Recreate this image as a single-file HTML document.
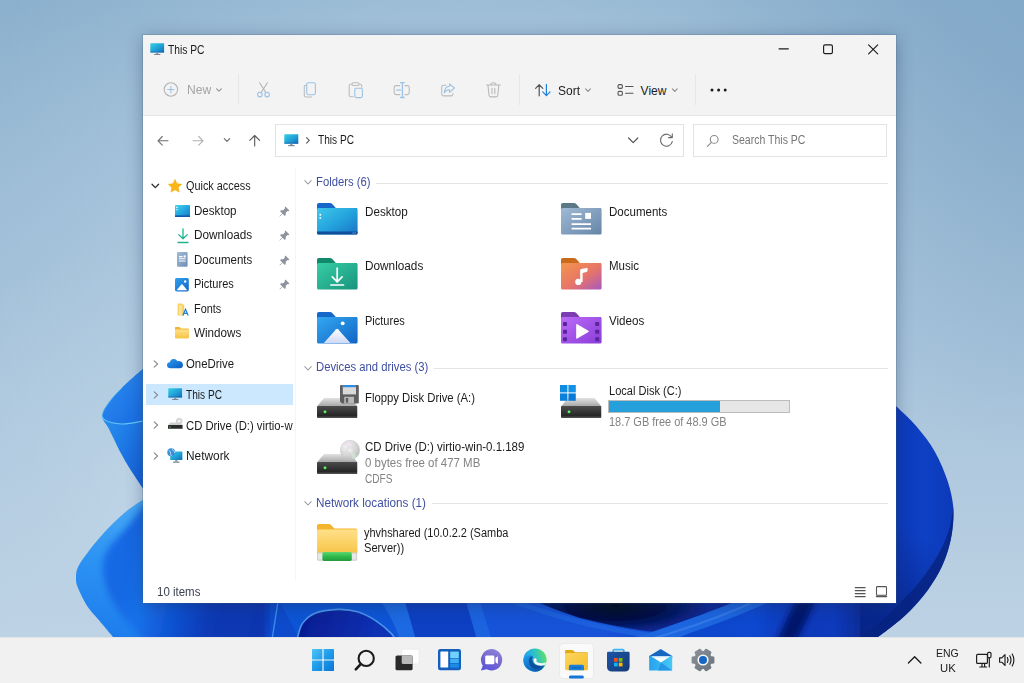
<!DOCTYPE html>
<html lang="en">
<head>
<meta charset="utf-8">
<title>This PC</title>
<style>
*{box-sizing:border-box;margin:0;padding:0}
html,body{width:1024px;height:683px;overflow:hidden;background:#a9c4db}
body{position:relative;font-family:"Liberation Sans",sans-serif;font-size:12px;color:#1b1b1b}
.abs{position:absolute}
svg{position:absolute;overflow:visible}
.t{position:absolute;white-space:nowrap;font-size:12px;line-height:16px;height:16px;color:#1b1b1b}
.g{color:#838383}
.hd{color:#3f4ea0}
#wall{left:0;top:0;width:1024px;height:683px}
#win{position:absolute;left:143px;top:35px;width:753.200px;height:568.400px;background:#fff;box-shadow:0 0 0 1px rgba(70,95,125,.22),0 3px 16px rgba(25,45,85,.38)}
#hdr{position:absolute;left:0;top:0;width:753px;height:80.500px;background:#f3f3f3;border-bottom:1px solid #e6e6e6}
#task{position:absolute;left:0;top:637px;width:1024px;height:46px;background:#f1f1f1;border-top:1px solid #e4e4e4}
.sep{position:absolute;width:1px;background:#e7e7e7}
.box{position:absolute;border:1px solid #e3e3e3;background:#fff}
.gl{position:absolute;height:1px;background:#e4e4e4}
.t{transform-origin:0 50%}
.ic{stroke-linecap:round;stroke-linejoin:round;fill:none}
</style>
</head>
<body>
<!-- WALLPAPER -->
<svg id="wall" viewBox="0 0 1024 683" width="1024" height="683">
<defs>
<linearGradient id="bgv" x1="0" y1="0" x2="0" y2="1"><stop offset="0" stop-color="#8bb0cd"/><stop offset=".45" stop-color="#a3c0d8"/><stop offset=".93" stop-color="#bdd2e4"/><stop offset="1" stop-color="#bdd2e4"/></linearGradient>
<radialGradient id="bgr" gradientUnits="userSpaceOnUse" cx="470" cy="230" r="560" gradientTransform="translate(0 70) scale(1 .7)"><stop offset="0" stop-color="#c4dbec" stop-opacity=".75"/><stop offset=".55" stop-color="#bcd4e7" stop-opacity=".4"/><stop offset="1" stop-color="#b4d0e4" stop-opacity="0"/></radialGradient>
<radialGradient id="bgd" gradientUnits="userSpaceOnUse" cx="1090" cy="40" r="420"><stop offset="0" stop-color="#7ba2c4" stop-opacity=".6"/><stop offset=".5" stop-color="#7ba2c4" stop-opacity=".28"/><stop offset="1" stop-color="#7ba2c4" stop-opacity="0"/></radialGradient>
<radialGradient id="bgl" gradientUnits="userSpaceOnUse" cx="150" cy="500" r="260"><stop offset="0" stop-color="#c6daeb" stop-opacity=".6"/><stop offset=".5" stop-color="#c0d6e8" stop-opacity=".3"/><stop offset="1" stop-color="#c0d6e8" stop-opacity="0"/></radialGradient>
<linearGradient id="pRd" gradientUnits="userSpaceOnUse" x1="930" y1="540" x2="880" y2="640"><stop offset="0" stop-color="#041462" stop-opacity="0"/><stop offset="1" stop-color="#041462" stop-opacity=".55"/></linearGradient>
<linearGradient id="pU" x1="0" y1="0" x2="1" y2="1"><stop offset="0" stop-color="#2d8ff0"/><stop offset="1" stop-color="#176ae2"/></linearGradient>
<linearGradient id="pUo" x1="0" y1="0" x2=".6" y2="1"><stop offset="0" stop-color="#3a9cf2"/><stop offset=".5" stop-color="#2283ea"/><stop offset="1" stop-color="#1460d8"/></linearGradient>
<linearGradient id="pL" gradientUnits="userSpaceOnUse" x1="130" y1="500" x2="100" y2="640"><stop offset="0" stop-color="#49a8f4"/><stop offset=".45" stop-color="#2d93f3"/><stop offset="1" stop-color="#1c7bec"/></linearGradient>
<linearGradient id="pLi" gradientUnits="userSpaceOnUse" x1="100" y1="560" x2="262" y2="600"><stop offset="0" stop-color="#1a70ea"/><stop offset=".12" stop-color="#1566e2"/><stop offset=".3" stop-color="#1a72ea"/><stop offset=".5" stop-color="#0f54d4"/><stop offset=".72" stop-color="#0a3ab6"/><stop offset="1" stop-color="#0a36b0"/></linearGradient>
<linearGradient id="pR" gradientUnits="userSpaceOnUse" x1="880" y1="500" x2="955" y2="500"><stop offset="0" stop-color="#0b37b6"/><stop offset=".6" stop-color="#0e40c4"/><stop offset="1" stop-color="#0c3ab8"/></linearGradient>
<linearGradient id="b1" gradientUnits="userSpaceOnUse" x1="140" y1="0" x2="262" y2="0"><stop offset="0" stop-color="#166ee4"/><stop offset=".2" stop-color="#0f56d4"/><stop offset=".5" stop-color="#0a3cb8"/><stop offset="1" stop-color="#0a36b0"/></linearGradient>
<linearGradient id="b2" gradientUnits="userSpaceOnUse" x1="300" y1="610" x2="395" y2="640"><stop offset="0" stop-color="#061c90"/><stop offset="1" stop-color="#0b36bc"/></linearGradient>
<radialGradient id="b3" gradientUnits="userSpaceOnUse" cx="615" cy="606" r="95" gradientTransform="translate(0 424) scale(1 .3)"><stop offset="0" stop-color="#01061e"/><stop offset=".5" stop-color="#030f48"/><stop offset="1" stop-color="#0a2a9a"/></radialGradient>
<linearGradient id="b4" gradientUnits="userSpaceOnUse" x1="600" y1="0" x2="900" y2="0"><stop offset="0" stop-color="#1352d8"/><stop offset=".3" stop-color="#0f46cc"/><stop offset=".51" stop-color="#0f48d0"/><stop offset=".65" stop-color="#0b39b8"/><stop offset=".78" stop-color="#0b3abc"/><stop offset=".87" stop-color="#092c98"/><stop offset="1" stop-color="#08278c"/></linearGradient>
<clipPath id="loclip"><path d="M150.0 496.0C148.8 496.7 146.3 497.6 142.5 500.0C138.7 502.4 132.2 506.6 127.3 510.5C122.4 514.4 118.3 518.2 113.2 523.3C108.1 528.4 101.7 535.2 96.8 540.9C91.9 546.6 87.2 553.0 84.0 557.5C80.8 562.0 78.9 564.8 77.6 568.0C76.3 571.2 76.0 573.8 76.0 577.0C76.0 580.2 75.7 582.1 77.6 587.0C79.5 591.9 83.9 600.9 87.5 606.5C91.1 612.1 95.1 615.6 99.2 620.5C103.3 625.4 109.2 632.4 112.0 635.8C114.8 639.2 115.3 640.1 116.0 641.0L150 641L150 496Z"/><rect x="140" y="598" width="130" height="40"/></clipPath>
<filter id="bl3" x="-20%" y="-20%" width="140%" height="140%"><feGaussianBlur stdDeviation="3"/></filter>
<filter id="bl1" x="-5%" y="-20%" width="110%" height="140%"><feGaussianBlur stdDeviation=".7"/></filter>
<clipPath id="strip"><rect x="140" y="598" width="730" height="40"/></clipPath>
</defs>
<rect width="1024" height="683" fill="url(#bgv)"/>
<rect width="1024" height="683" fill="url(#bgr)"/>
<rect width="1024" height="683" fill="url(#bgd)"/>
<rect width="1024" height="683" fill="url(#bgl)"/>
<!-- bottom strip -->
<g clip-path="url(#strip)"><g filter="url(#bl1)">
<rect x="140" y="598" width="760" height="40" fill="#1154d6"/>
<path d="M262 598L271 640H300L278 598Z" fill="#0f4ccc"/>
<path d="M272 640L278.500 598" stroke="#3c8cea" stroke-width="1.400" fill="none"/>
<path d="M297.4 638.0C298.2 635.6 299.5 627.5 302.5 623.4C305.5 619.3 309.3 615.5 315.2 613.2C321.1 610.9 330.8 609.6 338.0 609.4C345.2 609.2 352.1 610.1 358.4 612.0C364.7 613.9 370.5 617.3 376.0 620.9C381.5 624.5 388.2 630.4 391.4 633.6C394.6 636.8 394.4 638.9 395.0 640.0Z" fill="url(#b2)"/>
<path d="M297.4 638.0C298.2 635.6 299.5 627.5 302.5 623.4C305.5 619.3 309.3 615.5 315.2 613.2C321.1 610.9 330.8 609.6 338.0 609.4C345.2 609.2 352.1 610.1 358.4 612.0C364.7 613.9 370.5 617.3 376.0 620.9C381.5 624.5 388.2 630.4 391.4 633.6C394.6 636.8 394.4 638.9 395.0 640.0" stroke="#4a96ec" stroke-width="1.600" fill="none"/>
<path d="M378 598Q392 615 400 640H418L404 598Z" fill="#1d6ae2"/>
<path d="M404 598L416 640H478L465 598Z" fill="#0b3fc2"/>
<path d="M465 598L477 640H493L479 598Z" fill="#1a63e0"/>
<path d="M479 598L492 640H900V598Z" fill="#1352d8"/>
<rect x="600" y="598" width="300" height="42" fill="url(#b4)"/>
<path d="M528 598Q552 609 580 618Q620 628 655 632Q700 617 748 598Z" fill="url(#b3)"/>
<path d="M505 598Q545 613 580 622Q620 632 656 636" stroke="#2a6ee4" stroke-width="5" fill="none" opacity=".55"/>
<path d="M620 642L655 631Q700 616 745 598H778Q735 618 690 633L668 642Z" fill="#1f66e0"/>
<path d="M640 642L668 634Q720 618 762 598" stroke="#3a80ea" stroke-width="2" fill="none" opacity=".7"/>
<path d="M797 598H817L796 642H776Z" fill="#04186c" filter="url(#bl3)"/>
</g></g>
<!-- right petal -->
<path d="M890.0 401.0C891.1 401.9 892.1 402.2 896.5 406.5C900.9 410.8 910.2 419.0 916.6 426.6C923.0 434.2 929.8 442.8 935.0 452.0C940.2 461.2 944.8 472.4 947.8 481.6C950.8 490.8 952.5 499.3 953.3 507.2C954.1 515.1 953.4 521.7 952.5 529.0C951.6 536.3 950.1 543.7 947.8 551.0C945.5 558.3 942.6 565.7 938.6 573.0C934.6 580.3 929.5 588.0 924.0 595.0C918.5 602.0 911.7 609.2 905.6 615.0C899.5 620.8 892.9 625.7 887.3 630.0C881.7 634.3 874.5 639.2 872.0 641.0L860 641L860 401Z" fill="url(#pR)"/>
<path d="M890.0 401.0C891.1 401.9 892.1 402.2 896.5 406.5C900.9 410.8 910.2 419.0 916.6 426.6C923.0 434.2 929.8 442.8 935.0 452.0C940.2 461.2 944.8 472.4 947.8 481.6C950.8 490.8 952.5 499.3 953.3 507.2C954.1 515.1 953.4 521.7 952.5 529.0C951.6 536.3 950.1 543.7 947.8 551.0C945.5 558.3 942.6 565.7 938.6 573.0C934.6 580.3 929.5 588.0 924.0 595.0C918.5 602.0 911.7 609.2 905.6 615.0C899.5 620.8 892.9 625.7 887.3 630.0C881.7 634.3 874.5 639.2 872.0 641.0L860 641L860 401Z" fill="url(#pRd)"/>
<path d="M953.3 507.2C953.2 510.8 953.4 521.7 952.5 529.0C951.6 536.3 950.1 543.7 947.8 551.0C945.5 558.3 942.6 565.7 938.6 573.0C934.6 580.3 929.5 588.0 924.0 595.0C918.5 602.0 911.7 609.2 905.6 615.0C899.5 620.8 892.9 625.7 887.3 630.0C881.7 634.3 874.5 639.2 872.0 641.0L862 636L862.0 636.0C865.0 633.7 873.7 627.5 880.0 622.0C886.3 616.5 893.2 610.0 900.0 603.0C906.8 596.0 914.7 588.0 921.0 580.0C927.3 572.0 933.3 563.3 938.0 555.0C942.7 546.7 946.5 538.0 949.0 530.0C951.5 522.0 952.6 511.0 953.3 507.2Z" fill="#08237f" opacity=".8"/>
<!-- left lower petal -->
<path d="M150.0 496.0C148.8 496.7 146.3 497.6 142.5 500.0C138.7 502.4 132.2 506.6 127.3 510.5C122.4 514.4 118.3 518.2 113.2 523.3C108.1 528.4 101.7 535.2 96.8 540.9C91.9 546.6 87.2 553.0 84.0 557.5C80.8 562.0 78.9 564.8 77.6 568.0C76.3 571.2 76.0 573.8 76.0 577.0C76.0 580.2 75.7 582.1 77.6 587.0C79.5 591.9 83.9 600.9 87.5 606.5C91.1 612.1 95.1 615.6 99.2 620.5C103.3 625.4 109.2 632.4 112.0 635.8C114.8 639.2 115.3 640.1 116.0 641.0L150 641L150 496Z" fill="url(#pL)"/>
<g clip-path="url(#loclip)"><path d="M150.0 503.0C148.8 503.7 146.3 503.0 142.5 507.0C138.7 511.0 132.9 520.0 127.3 526.8C121.6 533.6 112.7 541.8 108.6 548.0C104.5 554.2 103.3 558.5 102.7 564.3C102.1 570.1 102.8 576.0 105.0 583.0C107.2 590.0 111.5 599.5 115.6 606.5C119.7 613.5 125.7 620.3 129.6 625.2C133.5 630.1 136.8 633.2 139.0 635.8C141.2 638.4 142.3 640.1 143.0 641.0L143 641L268 641L268 596L150 596L150 503Z" fill="url(#pLi)" filter="url(#bl3)"/></g>
<!-- left upper petal -->
<path d="M150.0 363.0C148.8 364.0 146.3 365.9 142.6 369.2C138.9 372.4 132.5 377.9 127.6 382.5C122.7 387.1 117.1 392.5 113.3 396.9C109.5 401.3 106.4 405.8 104.5 409.0C102.6 412.2 102.4 415.2 102.0 416.4L102.0 416.4C102.2 417.1 102.5 418.6 103.5 420.5C104.5 422.4 106.2 424.0 108.2 427.6C110.2 431.2 113.1 437.6 115.3 442.0C117.5 446.4 119.1 449.9 121.5 454.3C123.9 458.7 127.0 464.2 129.7 468.6C132.4 473.0 135.8 477.7 137.9 480.9C140.1 484.1 140.6 485.1 142.6 488.0C144.6 490.9 148.8 496.3 150.0 498.0L150 363Z" fill="url(#pUo)"/>
<path d="M150.0 363.0C148.8 364.0 146.3 365.9 142.6 369.2C138.9 372.4 132.5 377.9 127.6 382.5C122.7 387.1 117.1 392.5 113.3 396.9C109.5 401.3 106.4 405.8 104.5 409.0C102.6 412.2 102.4 415.2 102.0 416.4L102.0 416.4C102.4 416.9 103.0 418.6 104.5 419.6C106.0 420.6 108.4 421.8 111.2 422.5C114.0 423.2 118.1 423.9 121.5 424.0C124.9 424.1 128.2 423.6 131.7 423.1C135.2 422.6 139.5 421.6 142.6 421.0C145.7 420.4 148.8 419.8 150.0 419.5L150 363Z" fill="url(#pU)"/>
<path d="M102.0 416.4C102.4 416.9 103.0 418.6 104.5 419.6C106.0 420.6 108.4 421.8 111.2 422.5C114.0 423.2 118.1 423.9 121.5 424.0C124.9 424.1 128.2 423.6 131.7 423.1C135.2 422.6 139.5 421.6 142.6 421.0C145.7 420.4 148.8 419.8 150.0 419.5" fill="none" stroke="#62c8f8" stroke-width="1.100"/>
<path d="M122.0 388.0C120.5 389.5 116.2 393.4 113.3 396.9C110.4 400.4 106.4 405.8 104.5 409.0C102.6 412.2 102.4 415.2 102.0 416.4" fill="none" stroke="#58bef6" stroke-width="1" opacity=".75"/>
</svg>

<!-- WINDOW -->
<div id="win">
<div id="hdr"></div>
</div>
<!-- shared defs -->
<svg width="0" height="0" style="left:-10px;top:-10px">
<defs>
<linearGradient id="mon" x1="0" y1="0" x2="1" y2="1"><stop offset="0" stop-color="#35d0e6"/><stop offset=".55" stop-color="#1f9fd6"/><stop offset="1" stop-color="#1668b8"/></linearGradient>
<linearGradient id="fy" x1="0" y1="0" x2="0" y2="1"><stop offset="0" stop-color="#ffe08a"/><stop offset="1" stop-color="#f6c445"/></linearGradient>
<linearGradient id="dk" x1="0" y1="0" x2="1" y2="1"><stop offset="0" stop-color="#48d4f0"/><stop offset=".5" stop-color="#24a8e0"/><stop offset="1" stop-color="#1a78c8"/></linearGradient>
<linearGradient id="pic" x1="0" y1="0" x2="1" y2="1"><stop offset="0" stop-color="#2fa2f0"/><stop offset="1" stop-color="#1266c6"/></linearGradient>
<linearGradient id="doc" x1="0" y1="0" x2="1" y2="1"><stop offset="0" stop-color="#a3bcd8"/><stop offset="1" stop-color="#6f8db4"/></linearGradient>
<linearGradient id="od" x1="0" y1="0" x2="1" y2="1"><stop offset="0" stop-color="#2c9cf0"/><stop offset="1" stop-color="#0a5cc0"/></linearGradient>
<symbol id="pin" viewBox="0 0 11 11"><path d="M6.400 .6L10.400 4.600L9.300 5.300L8.500 5.100L6.800 6.800L6.700 9.100L5.800 9.900L3.600 7.700L.9 10.400L.5 10.500L.6 10.100L3.300 7.400L1.100 5.200L1.900 4.300L4.200 4.200L5.900 2.500L5.700 1.700Z" fill="#8d939c"/></symbol>
<symbol id="chr" viewBox="0 0 6 8"><path d="M1.200 .8L4.600 4L1.200 7.200" fill="none" stroke="#8b8b8b" stroke-width="1.150" stroke-linecap="round" stroke-linejoin="round"/></symbol>
<linearGradient id="fDk" x1="0" y1="0" x2="1" y2="1"><stop offset="0" stop-color="#40c8ea"/><stop offset=".5" stop-color="#24a4de"/><stop offset="1" stop-color="#1a72c4"/></linearGradient>
<linearGradient id="fDl" x1="0" y1="0" x2="1" y2="1"><stop offset="0" stop-color="#38cea6"/><stop offset="1" stop-color="#17937c"/></linearGradient>
<linearGradient id="fPc" x1="0" y1="0" x2="1" y2="1"><stop offset="0" stop-color="#33a8f2"/><stop offset="1" stop-color="#1164c4"/></linearGradient>
<linearGradient id="fDc" x1="0" y1="0" x2="1" y2="1"><stop offset="0" stop-color="#9fbad6"/><stop offset="1" stop-color="#6685a6"/></linearGradient>
<linearGradient id="fMu" x1="0" y1="0" x2="1" y2="1"><stop offset="0" stop-color="#f5964a"/><stop offset=".55" stop-color="#e6746a"/><stop offset="1" stop-color="#a858c0"/></linearGradient>
<linearGradient id="fVi" x1="0" y1="0" x2="1" y2="1"><stop offset="0" stop-color="#bb6cf8"/><stop offset="1" stop-color="#8a3cd8"/></linearGradient>
<linearGradient id="mtn" x1="0" y1="0" x2="0" y2="1"><stop offset="0" stop-color="#ffffff"/><stop offset="1" stop-color="#cfd8f6"/></linearGradient>
<linearGradient id="dTop" x1="0" y1="0" x2="0" y2="1"><stop offset="0" stop-color="#e2e2e2"/><stop offset="1" stop-color="#a6a6a6"/></linearGradient>
<linearGradient id="dFr" x1="0" y1="0" x2="0" y2="1"><stop offset="0" stop-color="#4b4b4b"/><stop offset=".8" stop-color="#272727"/><stop offset="1" stop-color="#555"/></linearGradient>
<radialGradient id="cdg" cx=".35" cy=".3" r=".8"><stop offset="0" stop-color="#f6f6f6"/><stop offset=".6" stop-color="#d4d4d4"/><stop offset="1" stop-color="#b4b4b4"/></radialGradient>
<linearGradient id="grn" x1="0" y1="0" x2="0" y2="1"><stop offset="0" stop-color="#5fd873"/><stop offset=".5" stop-color="#2fba4c"/><stop offset="1" stop-color="#249a3e"/></linearGradient>
<symbol id="tab" viewBox="0 0 40.600 31.600"><path d="M0 1.800Q0 0 1.800 0H12.800Q14.400 0 15.500 1.200L18.800 4.900H40V12H0Z"/></symbol>
<symbol id="drv" viewBox="0 0 40.500 20"><path d="M7 0H33.500L40.300 8.200H.2Z" fill="url(#dTop)"/><rect y="8" width="40.500" height="12" rx=".8" fill="url(#dFr)"/><circle cx="8" cy="13.800" r="1.500" fill="#3fe444"/><circle cx="8" cy="13.800" r=".7" fill="#a4ffa0"/></symbol>
<symbol id="gch" viewBox="0 0 8 5"><path d="M.8 .7L4 4L7.200 .7" fill="none" stroke="#9a9a9a" stroke-width="1.050" stroke-linecap="round" stroke-linejoin="round"/></symbol>
<linearGradient id="wl" gradientUnits="userSpaceOnUse" x1="0" y1="0" x2="22" y2="22"><stop offset="0" stop-color="#4ec4f8"/><stop offset=".5" stop-color="#1e9cea"/><stop offset="1" stop-color="#0a74d8"/></linearGradient>
<linearGradient id="cht" x1=".8" y1="0" x2=".3" y2="1"><stop offset="0" stop-color="#8e86da"/><stop offset=".5" stop-color="#7767cf"/><stop offset="1" stop-color="#5a55da"/></linearGradient>
<linearGradient id="edT" x1="0" y1=".5" x2="1" y2=".25"><stop offset="0" stop-color="#1b96e2"/><stop offset=".3" stop-color="#22b2e2"/><stop offset=".62" stop-color="#37c8b4"/><stop offset="1" stop-color="#66e35c"/></linearGradient>
<linearGradient id="edB" x1=".1" y1=".1" x2=".75" y2="1"><stop offset="0" stop-color="#1b96e2"/><stop offset=".45" stop-color="#1578d0"/><stop offset="1" stop-color="#0c54a6"/></linearGradient>
<linearGradient id="sto" x1="0" y1="0" x2="1" y2="1"><stop offset="0" stop-color="#1c55a8"/><stop offset="1" stop-color="#153a74"/></linearGradient>
<linearGradient id="mlb" x1="0" y1="0" x2="1" y2="0"><stop offset="0" stop-color="#27a2ec"/><stop offset="1" stop-color="#46c8f6"/></linearGradient>
<linearGradient id="gr" x1="0" y1="0" x2="1" y2="1"><stop offset="0" stop-color="#8a9199"/><stop offset="1" stop-color="#6a727c"/></linearGradient>
<linearGradient id="exy" x1="0" y1="0" x2="1" y2="1"><stop offset="0" stop-color="#fcd660"/><stop offset="1" stop-color="#f6bd2a"/></linearGradient>
<symbol id="pc" viewBox="0 0 15 13"><rect x=".3" y=".3" width="14.400" height="9.600" rx=".6" fill="url(#mon)"/><rect x=".3" y="8.800" width="14.400" height="1.100" fill="#0f5aa5" opacity=".55"/><rect x="6.300" y="9.900" width="2.400" height="1.500" fill="#8a98a6"/><rect x="4.200" y="11.300" width="6.600" height="1.100" rx=".3" fill="#7b8894"/></symbol>
</defs>
</svg>

<!-- TITLE BAR -->
<svg style="left:150px;top:43px" width="14.500" height="12.600"><use href="#pc" width="14.500" height="12.600"/></svg>
<div class="t" style="left:167.6px;top:42.100px;transform:scaleX(0.855)">This PC</div>
<svg style="left:776px;top:40px" width="110" height="20" viewBox="776 40 110 20" class="ic" stroke="#1d1d1d" stroke-width="1.150">
<path d="M779 48.800H788.300"/>
<rect x="823.600" y="44.800" width="8.800" height="8.800" rx="1.400"/>
<path d="M868.600 44.800L877.700 53.900M877.700 44.800L868.600 53.900"/>
</svg>

<!-- TOOLBAR -->
<svg style="left:143px;top:70px" width="753" height="40" viewBox="143 70 753 40" class="ic" stroke-width="1.100">
<!-- new -->
<circle cx="170.900" cy="89.500" r="6.700" stroke="#b5b5b5"/>
<path d="M170.900 86.300V92.700M167.700 89.500H174.100" stroke="#9cc3e6"/>
<path d="M216.600 88.800L219 91.200L221.400 88.800" stroke="#9a9a9a" stroke-width="1.200"/>
<!-- cut -->
<path d="M259.600 82.800L266 92.700M267.400 82.800L261 92.700" stroke="#b4b4b4"/>
<circle cx="259.900" cy="94.600" r="2.300" stroke="#9cc3e6"/><circle cx="267.100" cy="94.600" r="2.300" stroke="#9cc3e6"/>
<!-- copy -->
<path d="M306 85.200H305.600Q304.300 85.200 304.300 86.600V95.400Q304.300 97 305.900 97H311.600" stroke="#bcbcbc"/>
<rect x="306.700" y="82.700" width="8.700" height="12" rx="1.600" stroke="#9cc3e6"/>
<!-- paste -->
<path d="M351.500 84.300H350.600Q349.200 84.300 349.200 85.700V95.300Q349.200 96.800 350.600 96.800H353.200M359.500 84.300H360.300Q361.700 84.300 361.700 85.700V87" stroke="#bcbcbc"/>
<rect x="352" y="82.700" width="7" height="2.800" rx="1.200" stroke="#bcbcbc"/>
<rect x="354.800" y="88.200" width="7.600" height="9.400" rx="1.500" stroke="#9cc3e6"/>
<!-- rename -->
<path d="M399.800 85.600H396Q394.200 85.600 394.200 87.400V92.800Q394.200 94.600 396 94.600H399.800M405 85.600H407.500Q409.200 85.600 409.200 87.400V92.800Q409.200 94.600 407.500 94.600H405" stroke="#bcbcbc"/>
<path d="M400.600 82.700H404.200M400.600 97.500H404.200M402.400 82.700V97.500M396.800 90.100H400.600" stroke="#9cc3e6" stroke-width="1.300"/>
<!-- share -->
<path d="M446 85.200H443.600Q441.700 85.200 441.700 87.100V94Q441.700 95.900 443.600 95.900H451.200Q453 95.900 453 94V93.600" stroke="#bcbcbc"/>
<path d="M449.600 83.800L454.400 88L449.600 92.300V89.800Q446.200 89.600 444.300 92.700Q444.500 86.600 449.600 86.200Z" stroke="#9cc3e6"/>
<!-- trash -->
<path d="M486.600 85H500.200M490.800 84.800Q490.900 82.800 493.400 82.800Q495.900 82.800 496 84.800M488 85.200L489 95.300Q489.200 96.900 490.800 96.900H496Q497.600 96.900 497.800 95.300L498.800 85.200M492 88.400V93.600M494.800 88.400V93.600" stroke="#b8b8b8"/>
<!-- sort -->
<path d="M539.200 95.800V84.800M535.600 88.300L539.200 84.600L542.800 88.300" stroke="#555" stroke-width="1.200"/>
<path d="M546.400 84.400V95.400M542.800 91.900L546.400 95.600L550 91.900" stroke="#1f80d8" stroke-width="1.200"/>
<path d="M585.600 88.900L588 91.300L590.400 88.900" stroke="#8a8a8a" stroke-width="1.100"/>
<!-- view -->
<rect x="618" y="84.600" width="4.400" height="3.800" rx="1.300" stroke="#555"/><rect x="618" y="91.400" width="4.400" height="3.800" rx="1.300" stroke="#555"/>
<path d="M625.600 86.500H633M625.600 93.300H633" stroke="#555"/>
<path d="M672.400 88.900L674.800 91.300L677.200 88.900" stroke="#8a8a8a" stroke-width="1.100"/>
<!-- dots -->
<g fill="#1b1b1b" stroke="none"><circle cx="712" cy="90" r="1.500"/><circle cx="718.600" cy="90" r="1.500"/><circle cx="725.200" cy="90" r="1.500"/></g>
</svg>
<div class="sep" style="left:238px;top:74px;height:31px"></div>
<div class="sep" style="left:519px;top:74px;height:31px"></div>
<div class="sep" style="left:694.500px;top:74px;height:31px"></div>
<div class="t" style="left:187.1px;top:82.200px;color:#a3a3a3;transform:scaleX(1.007)">New</div>
<div class="t" style="left:557.9px;top:82.600px;transform:scaleX(0.999)">Sort</div>
<div class="t" style="left:640.6px;top:82.600px;transform:scaleX(1.000)">View</div>

<!-- ADDRESS ROW -->
<div class="box" style="left:275px;top:123.500px;width:408.500px;height:33.500px"></div>
<div class="box" style="left:693px;top:123.500px;width:194px;height:33.500px"></div>
<svg style="left:143px;top:125px" width="753" height="32" viewBox="143 125 753 32" class="ic" stroke-width="1.100">
<path d="M168 140.800H158M162.300 136.500L158 140.800L162.300 145.100" stroke="#6e6e6e"/>
<path d="M193 140.800H203M198.700 136.500L203 140.800L198.700 145.100" stroke="#b0b0b0"/>
<path d="M224.300 138.600L227 141.300L229.700 138.600" stroke="#6e6e6e" stroke-width="1.200"/>
<path d="M254.700 146V135.600M249.800 140.400L254.700 135.500L259.600 140.400" stroke="#5a5a5a"/>
<path d="M306.600 137.700L309.300 140.400L306.600 143.100" stroke="#555" stroke-width="1.100"/>
<path d="M628.600 138L633.200 142.600L637.800 138" stroke="#555" stroke-width="1.200"/>
<path d="M671.800 137.400A6 6 0 1 0 672.300 141.600M672.300 133.800V137.600H668.500" stroke="#6a6a6a"/>
<circle cx="714.200" cy="139.400" r="3.900" stroke="#8a8a8a"/><path d="M711.400 142.300L707.400 146.300" stroke="#8a8a8a"/>
</svg>
<svg style="left:284px;top:133.500px" width="14.700" height="12.800"><use href="#pc" width="14.700" height="12.800"/></svg>
<div class="t" style="left:318.2px;top:132px;transform:scaleX(0.845)">This PC</div>
<div class="t" style="left:732.0px;top:132px;color:#767676;transform:scaleX(0.876)">Search This PC</div>

<!-- SIDEBAR -->
<div class="abs" style="left:294.500px;top:168px;width:1px;height:412px;background:#f5f5f5"></div>
<div class="abs" style="left:145.500px;top:384px;width:147.500px;height:20.800px;background:#cce8ff"></div>
<svg style="left:151px;top:183px" width="9" height="6" viewBox="0 0 9 6"><path d="M1 1.200L4.300 4.600L7.600 1.200" fill="none" stroke="#2b2b2b" stroke-width="1.250" stroke-linecap="round" stroke-linejoin="round"/></svg>
<svg style="left:153px;top:360px" width="6" height="8"><use href="#chr" width="6" height="8"/></svg>
<svg style="left:153px;top:390.500px" width="6" height="8"><use href="#chr" width="6" height="8"/></svg>
<svg style="left:153px;top:421px" width="6" height="8"><use href="#chr" width="6" height="8"/></svg>
<svg style="left:153px;top:452px" width="6" height="8"><use href="#chr" width="6" height="8"/></svg>
<!-- star -->
<svg style="left:167.600px;top:178.600px" width="14" height="14" viewBox="0 0 14 14"><path d="M7 .5L9 4.700L13.600 5.300L10.200 8.500L11.100 13.100L7 10.800L2.900 13.100L3.800 8.500L.4 5.300L5 4.700Z" fill="#f9b716" stroke="#f7a90c" stroke-width=".6" stroke-linejoin="round"/></svg>
<!-- desktop small -->
<svg style="left:174.600px;top:204.600px" width="15" height="12" viewBox="0 0 15 12"><rect width="15" height="12" rx=".8" fill="url(#dk)"/><rect y="10.400" width="15" height="1.600" fill="#1258a8"/><rect x="1.300" y="1.800" width="1.200" height="1.200" fill="#fff"/><rect x="1.300" y="4" width="1.200" height="1.200" fill="#e6f6ff"/></svg>
<!-- downloads small -->
<svg style="left:176.500px;top:227.500px" width="12" height="16" viewBox="0 0 12 16"><path d="M6 .8V10.600M1.800 6.600L6 10.800L10.200 6.600M1 14.500H11" fill="none" stroke="#1fb28f" stroke-width="1.300" stroke-linecap="round" stroke-linejoin="round"/></svg>
<!-- documents small -->
<svg style="left:177px;top:252.300px" width="10.600" height="14.700" viewBox="0 0 10.600 14.700"><rect width="10.600" height="14.700" rx="1" fill="url(#doc)"/><path d="M2 4.600H5.600M2 6.800H8.600M2 9H8.600" stroke="#fff" stroke-width="1.100"/><rect x="6.600" y="3.400" width="2.200" height="2" fill="#fff"/></svg>
<!-- pictures small -->
<svg style="left:175.300px;top:277.500px" width="13.800" height="13.400" viewBox="0 0 13.800 13.400"><rect width="13.800" height="13.400" rx="1.600" fill="url(#pic)"/><path d="M1.600 12.200L6.300 6.600Q6.900 5.900 7.500 6.600L12.200 12.200Z" fill="#fff"/><circle cx="10.200" cy="3.500" r="1.200" fill="#fff"/></svg>
<!-- fonts small -->
<svg style="left:177px;top:302.500px" width="12" height="13" viewBox="0 0 12 13"><path d="M.6 .4H4.600L5.600 1.400H7.200V12.400H.6Z" fill="#f7cf5e"/><path d="M1.800 1.600L5.200 2.400V12.400H1.800Z" fill="#fbe29a"/><path d="M5.800 12.400L8.500 6.200L11.200 12.400M6.900 10.300H10.100" fill="none" stroke="#1f7fd8" stroke-width="1.200"/></svg>
<!-- windows folder small -->
<svg style="left:175.300px;top:327.400px" width="13.800" height="11.200" viewBox="0 0 13.800 11.200"><path d="M.6 0H4.600L6 1.400H13Q13.800 1.400 13.800 2.200V10.400Q13.800 11.200 13 11.200H.8Q0 11.200 0 10.400V.6Q0 0 .6 0Z" fill="#f2b733"/><rect y="2.600" width="13.800" height="8.600" rx=".8" fill="url(#fy)"/></svg>
<!-- onedrive -->
<svg style="left:166.600px;top:358.200px" width="16" height="10.200" viewBox="0 0 16 10.200"><path d="M3.600 10.200Q0 10.200 0 7.200Q0 4.600 2.800 4.300Q3.400 1.200 6.600 .9Q9.200 .8 10.500 3.200Q11.200 2.800 12.200 2.900Q15.800 3.400 16 7Q15.800 10.200 12.800 10.200Z" fill="url(#od)"/></svg>
<!-- this pc -->
<svg style="left:167.500px;top:388.300px" width="14.400" height="12.600"><use href="#pc" width="14.400" height="12.600"/></svg>
<!-- cd drive small -->
<svg style="left:167.600px;top:418px" width="14.600" height="11" viewBox="0 0 14.600 11"><circle cx="11.200" cy="3.200" r="3" fill="#dcdcdc" stroke="#bdbdbd" stroke-width=".5"/><circle cx="11.200" cy="3.200" r=".9" fill="#fff"/><path d="M2.400 4.600H12.400L14.600 7.200H0Z" fill="#cfcfcf"/><rect y="7" width="14.600" height="3.800" rx=".4" fill="#2b2b2b"/><circle cx="2" cy="8.900" r=".7" fill="#46e04a"/></svg>
<!-- network -->
<svg style="left:167px;top:448px" width="15.600" height="15.600" viewBox="0 0 15.600 15.600"><rect x="3.200" y="3.600" width="12.200" height="8.400" rx=".6" fill="url(#mon)"/><rect x="8.200" y="12" width="2.200" height="1.700" fill="#8a98a6"/><rect x="6" y="13.600" width="6.600" height="1.100" rx=".3" fill="#7b8894"/><circle cx="4.200" cy="4.200" r="3.900" fill="#3a8fd8"/><path d="M1.600 2.200Q4 3.400 3.600 5.400Q3.200 7 4.600 8M5.600 .8Q4.800 2 6.600 2.800Q8 3.400 7.600 5" fill="none" stroke="#bfe3f8" stroke-width=".9"/></svg>
<!-- pins -->
<svg style="left:279.300px;top:205.600px" width="11" height="11"><use href="#pin" width="11" height="11"/></svg>
<svg style="left:279.300px;top:230.100px" width="11" height="11"><use href="#pin" width="11" height="11"/></svg>
<svg style="left:279.300px;top:254.600px" width="11" height="11"><use href="#pin" width="11" height="11"/></svg>
<svg style="left:279.300px;top:279.100px" width="11" height="11"><use href="#pin" width="11" height="11"/></svg>
<!-- labels -->
<div class="t" style="left:185.8px;top:178.200px;transform:scaleX(0.906)">Quick access</div>
<div class="t" style="left:193.8px;top:202.700px;transform:scaleX(0.966)">Desktop</div>
<div class="t" style="left:193.8px;top:227.100px;transform:scaleX(0.979)">Downloads</div>
<div class="t" style="left:193.8px;top:251.600px;transform:scaleX(0.960)">Documents</div>
<div class="t" style="left:193.8px;top:276.200px;transform:scaleX(0.918)">Pictures</div>
<div class="t" style="left:193.8px;top:300.600px;transform:scaleX(0.909)">Fonts</div>
<div class="t" style="left:193.8px;top:325.100px;transform:scaleX(0.972)">Windows</div>
<div class="t" style="left:185.8px;top:356.100px;transform:scaleX(0.949)">OneDrive</div>
<div class="t" style="left:186.2px;top:386.700px;transform:scaleX(0.845)">This PC</div>
<div class="abs" style="left:186.200px;top:417.500px;width:106.600px;height:16px;overflow:hidden"><div class="t" style="left:0;top:0;transform:scaleX(.94)">CD Drive (D:) virtio-win-0.1.189</div></div>
<div class="t" style="left:186.2px;top:448px;transform:scaleX(0.989)">Network</div>

<!-- MAIN CONTENT: group headers -->
<svg style="left:303.800px;top:180.300px" width="8" height="5"><use href="#gch" width="8" height="5"/></svg>
<svg style="left:303.800px;top:366px" width="8" height="5"><use href="#gch" width="8" height="5"/></svg>
<svg style="left:303.800px;top:500.500px" width="8" height="5"><use href="#gch" width="8" height="5"/></svg>
<div class="t hd" style="left:316.1px;top:174.100px;transform:scaleX(0.941)">Folders (6)</div>
<div class="t hd" style="left:316.1px;top:359.400px;transform:scaleX(0.940)">Devices and drives (3)</div>
<div class="t hd" style="left:316.1px;top:495.200px;transform:scaleX(0.976)">Network locations (1)</div>
<div class="gl" style="left:376px;top:182.500px;width:512px"></div>
<div class="gl" style="left:433.500px;top:368px;width:454.500px"></div>
<div class="gl" style="left:432px;top:502.500px;width:456px"></div>

<!-- Desktop folder -->
<svg style="left:316.900px;top:203.200px" width="40.600" height="31.600" viewBox="0 0 40.600 31.600"><use href="#tab" width="40.600" height="31.600" fill="#1767cb"/><rect y="4.900" width="40.600" height="26.700" rx="1.600" fill="url(#fDk)"/><path d="M0 28.600H40.600V30Q40.600 31.600 39 31.600H1.600Q0 31.600 0 30Z" fill="#0f4f9c"/><rect x="35.600" y="29.500" width="1.200" height="1" fill="#7fb5e8"/><rect x="37.600" y="29.500" width="1.200" height="1" fill="#7fb5e8"/><circle cx="3.300" cy="11.700" r=".95" fill="#fff"/><circle cx="3.300" cy="15" r=".95" fill="#e8f8ff"/></svg>
<div class="t" style="left:364.9px;top:203.700px;transform:scaleX(0.970)">Desktop</div>
<!-- Downloads folder -->
<svg style="left:316.900px;top:257.700px" width="40.600" height="31.600" viewBox="0 0 40.600 31.600"><use href="#tab" width="40.600" height="31.600" fill="#12896a"/><rect y="4.900" width="40.600" height="26.700" rx="1.600" fill="url(#fDl)"/><path d="M20.200 10V23.600M15.300 18.900L20.200 23.800L25.100 18.900M13.900 27H26.500" fill="none" stroke="#fff" stroke-width="1.700" stroke-linecap="round" stroke-linejoin="round"/></svg>
<div class="t" style="left:364.9px;top:258.100px;transform:scaleX(0.982)">Downloads</div>
<!-- Pictures folder -->
<svg style="left:316.900px;top:312.200px" width="40.600" height="31.600" viewBox="0 0 40.600 31.600"><use href="#tab" width="40.600" height="31.600" fill="#1767cb"/><rect y="4.900" width="40.600" height="26.700" rx="1.600" fill="url(#fPc)"/><path d="M6.800 31L19.200 17.300Q20.100 16.400 21 17.300L33.400 31Z" fill="url(#mtn)"/><circle cx="25.700" cy="11.300" r="1.900" fill="#fff"/></svg>
<div class="t" style="left:364.9px;top:312.500px;transform:scaleX(0.918)">Pictures</div>
<!-- Documents folder -->
<svg style="left:560.800px;top:203.200px" width="40.600" height="31.600" viewBox="0 0 40.600 31.600"><use href="#tab" width="40.600" height="31.600" fill="#5b7888"/><rect y="4.900" width="40.600" height="26.700" rx="1.600" fill="url(#fDc)"/><path d="M10.600 11.200H20.600M10.600 15.900H20.600M10.600 21.100H30M10.600 25.600H30" stroke="#fff" stroke-width="1.700"/><rect x="24.200" y="9.900" width="5.800" height="6" fill="#fff"/></svg>
<div class="t" style="left:608.6px;top:203.500px;transform:scaleX(0.960)">Documents</div>
<!-- Music folder -->
<svg style="left:560.800px;top:257.700px" width="40.600" height="31.600" viewBox="0 0 40.600 31.600"><use href="#tab" width="40.600" height="31.600" fill="#c96a1c"/><rect y="4.900" width="40.600" height="26.700" rx="1.600" fill="url(#fMu)"/><circle cx="17.300" cy="23.900" r="3.100" fill="#fff"/><path d="M19.200 24V12.600Q19.200 11.400 20.400 11.100L25.400 9.900Q26.600 9.700 26.600 10.900V12.600Q26.600 13.600 25.500 13.900L21.600 14.900V24Z" fill="#fff"/></svg>
<div class="t" style="left:608.6px;top:258px;transform:scaleX(0.960)">Music</div>
<!-- Videos folder -->
<svg style="left:560.800px;top:312.200px" width="40.600" height="31.600" viewBox="0 0 40.600 31.600"><use href="#tab" width="40.600" height="31.600" fill="#7a3eb2"/><rect y="4.900" width="40.600" height="26.700" rx="1.600" fill="url(#fVi)"/><g fill="#5a259a"><rect x="2" y="10" width="4" height="4" rx=".8"/><rect x="2" y="17.700" width="4" height="4" rx=".8"/><rect x="2" y="25.300" width="4" height="4" rx=".8"/><rect x="34.200" y="10" width="4" height="4" rx=".8"/><rect x="34.200" y="17.700" width="4" height="4" rx=".8"/><rect x="34.200" y="25.300" width="4" height="4" rx=".8"/></g><path d="M15.200 12.800Q15.200 11.600 16.300 12.200L27.400 18.800Q28.300 19.400 27.400 20L16.300 26.600Q15.200 27.200 15.200 26Z" fill="#fff"/></svg>
<div class="t" style="left:608.6px;top:312.500px;transform:scaleX(0.968)">Videos</div>

<!-- Floppy -->
<svg style="left:316.900px;top:397.700px" width="40.500" height="20"><use href="#drv" width="40.500" height="20"/></svg>
<svg style="left:339.800px;top:385.200px" width="18.800" height="18.400" viewBox="0 0 18.800 18.400"><path d="M0 1Q0 0 1 0H17.800Q18.800 0 18.800 1V17.400Q18.800 18.400 17.800 18.400H2L0 16.400Z" fill="#5e5e5e"/><rect x="2.800" y="0" width="13.200" height="9.400" fill="#d9d9d9"/><rect x="2.800" y="0" width="13.200" height="2.200" fill="#2d8be0"/><rect x="4.200" y="11.800" width="9.800" height="6.600" fill="#b9b9b9"/><rect x="5.800" y="13" width="2.400" height="4.600" fill="#5e5e5e"/></svg>
<div class="t" style="left:364.9px;top:390px;transform:scaleX(0.943)">Floppy Disk Drive (A:)</div>
<!-- CD drive -->
<svg style="left:316.900px;top:453.500px" width="40.500" height="20"><use href="#drv" width="40.500" height="20"/></svg>
<svg style="left:339.800px;top:439.600px" width="20" height="20" viewBox="0 0 20 20"><circle cx="10" cy="10" r="9.700" fill="url(#cdg)" stroke="#c2c2c2" stroke-width=".5"/><path d="M10 10L3 4A9.300 9.300 0 0 1 8 .9Z" fill="#f0d6ec" opacity=".55"/><path d="M10 10L17 16A9.300 9.300 0 0 1 12 19.100Z" fill="#d4ecd6" opacity=".6"/><circle cx="10" cy="10" r="3.300" fill="#ececec" stroke="#c9c9c9" stroke-width=".5"/><circle cx="10" cy="10" r="1.500" fill="#fff" stroke="#bdbdbd" stroke-width=".4"/></svg>
<div class="t" style="left:364.6px;top:438.800px;transform:scaleX(0.956)">CD Drive (D:) virtio-win-0.1.189</div>
<div class="t g" style="left:364.6px;top:454.500px;transform:scaleX(0.955)">0 bytes free of 477 MB</div>
<div class="t g" style="left:364.6px;top:471px;transform:scaleX(0.840)">CDFS</div>
<!-- Local Disk -->
<svg style="left:560.600px;top:397.700px" width="40.500" height="20"><use href="#drv" width="40.500" height="20"/></svg>
<svg style="left:559.600px;top:385.200px" width="15.800" height="15.800" viewBox="0 0 15.800 15.800"><g fill="#0f8be2"><rect width="7.400" height="7.400"/><rect x="8.400" width="7.400" height="7.400" fill="#1592e6"/><rect y="8.400" width="7.400" height="7.400" fill="#0b80da"/><rect x="8.400" y="8.400" width="7.400" height="7.400" fill="#0a7ad6"/></g></svg>
<div class="t" style="left:608.5px;top:383.200px;transform:scaleX(0.921)">Local Disk (C:)</div>
<div class="abs" style="left:608px;top:399.600px;width:182px;height:13.800px;background:#e6e6e6;border:1px solid #bcbcbc"><div style="width:110.800px;height:100%;background:#26a0da"></div></div>
<div class="t g" style="left:608.5px;top:414.200px;transform:scaleX(0.913)">18.7 GB free of 48.9 GB</div>
<!-- Network location -->
<svg style="left:317px;top:523.800px" width="40.200" height="37" viewBox="0 0 40.200 37"><path d="M0 1.800Q0 0 1.800 0H11.600Q13.200 0 14.300 1.200L17.400 4.600H38.400Q40.200 4.600 40.200 6.400V30H0Z" fill="#f4b52c"/><rect y="5.400" width="40.200" height="25" rx="1.600" fill="url(#fy)"/><rect x="0" y="28.400" width="40.200" height="8.400" rx="1.400" fill="#cfcfcf"/><rect x="1" y="29.600" width="38.200" height="6" rx="1" fill="#e8e8e8"/><rect x="5.400" y="27.900" width="29.400" height="9" rx="1.600" fill="url(#grn)"/></svg>
<div class="t" style="left:364.4px;top:524.800px;transform:scaleX(0.913)">yhvhshared (10.0.2.2 (Samba</div>
<div class="t" style="left:364.4px;top:540px;transform:scaleX(0.928)">Server))</div>

<!-- STATUS BAR -->
<div class="t" style="left:156.5px;top:584.100px;color:#3c4250;transform:scaleX(0.957)">10 items</div>
<svg style="left:853px;top:585px" width="36" height="14" viewBox="853 585 36 14" class="ic" stroke="#555" stroke-width="1.050"><path d="M855.200 587.600H865.200M855.200 590.600H865.200M855.200 593.600H865.200M855.200 596.600H865.200"/><rect x="876.500" y="586.600" width="10" height="8.600" rx=".8"/><path d="M876.500 596.500H886.500" stroke-width="1.500"/></svg>

<!-- TASKBAR -->
<div id="task"></div>
<!-- start -->
<svg style="left:312px;top:649.300px" width="22" height="22" viewBox="0 0 22 22"><g fill="url(#wl)"><rect width="10.400" height="10.400" rx=".6"/><rect x="11.600" width="10.400" height="10.400" rx=".6"/><rect y="11.600" width="10.400" height="10.400" rx=".6"/><rect x="11.600" y="11.600" width="10.400" height="10.400" rx=".6"/></g></svg>
<!-- search -->
<svg style="left:352px;top:648px" width="26" height="26" viewBox="352 648 26 26" fill="none" stroke="#1b1b1b" stroke-linecap="round"><circle cx="366.200" cy="658.400" r="7.600" stroke-width="2.100"/><path d="M360.500 664.400L355.800 669.400" stroke-width="2.600"/></svg>
<!-- task view -->
<svg style="left:394px;top:648px" width="28" height="26" viewBox="394 648 28 26"><rect x="401.700" y="649.200" width="17.300" height="14.800" rx="1.600" fill="#fdfdfd" stroke="#e0e0e0" stroke-width=".5"/><rect x="395.500" y="655.500" width="17.100" height="14.800" rx="1.600" fill="#2a2a2a"/><path d="M401.700 655.500H412.600V664H403.300Q401.700 664 401.700 662.400Z" fill="#b9b9b9"/></svg>
<!-- widgets -->
<svg style="left:438.300px;top:649.200px" width="23" height="21.200" viewBox="0 0 23 21.200"><rect width="23" height="21.200" rx="2.200" fill="#1560bc"/><rect x="2.400" y="2.600" width="7.800" height="16" rx=".6" fill="#fff"/><rect x="12.200" y="2.600" width="8.600" height="6.600" fill="#6fd2ff"/><rect x="12.200" y="9.800" width="8.600" height="4.200" fill="#3fb0f4"/><rect x="12.200" y="14.600" width="8.600" height="4" fill="#1f8ae6"/></svg>
<!-- chat -->
<svg style="left:479px;top:647px" width="26" height="26" viewBox="479 647 26 26"><path d="M491.600 649.100A10.700 10.700 0 1 1 486.600 669.300L480.900 670.600L482.800 665.700A10.700 10.700 0 0 1 491.600 649.100Z" fill="url(#cht)"/><rect x="485.200" y="655.500" width="9.200" height="8.800" rx="1.300" fill="#fff"/><path d="M495.500 658L497.900 656.200V664L495.500 662.200Z" fill="#fff"/></svg>
<!-- edge -->
<svg style="left:522.500px;top:647.800px" width="24" height="24" viewBox="0 0 24 24"><circle cx="12" cy="12" r="11.600" fill="url(#edT)"/><path d="M.4 11.400Q2.400 8.200 5.600 7.400Q8.400 7 10 8.400Q9 10 9.200 12.200Q9.800 16 13.400 17.200Q17.600 18 21.600 16.800Q21 19 18.600 21.500A11.600 11.600 0 0 1 .4 11.400Z" fill="url(#edB)"/><path d="M5.800 12.400Q6 8.600 9.800 8.200Q8.800 10.200 9.300 12.800Q10.400 16.600 14.400 17.600Q17 18 19.600 17.600Q16.600 21.200 12.400 20.800Q6.200 19.400 5.800 12.400Z" fill="#0b4792" opacity=".8"/><path d="M10.500 12Q10.500 10.200 12.100 10.200Q13.800 10.300 13.700 12Q13.600 13 13.200 13.500Q15.400 15.500 19 15.300Q21.400 15.100 22.900 14.300Q22.800 16.200 21.600 17.300Q18 18.100 14.800 17.300Q10.700 15.700 10.500 12Z" fill="#f6f6f6"/></svg>
<!-- explorer -->
<div class="abs" style="left:558.500px;top:642.500px;width:35.500px;height:36px;border-radius:4px;background:#fafafa;border:1px solid #ebebeb"></div>
<svg style="left:565px;top:649.800px" width="23" height="29" viewBox="0 0 23 29"><path d="M0 1.400Q0 0 1.400 0H7Q8 0 8.700 .8L10 2.300H21.600Q23 2.300 23 3.700V12H0Z" fill="#e2a917"/><rect y="3" width="23" height="17.200" rx="1.400" fill="url(#exy)"/><path d="M3.900 20.200V16.400Q3.900 14.800 5.500 14.800H17.400Q19 14.800 19 16.400V20.200Z" fill="#1a7fdc"/><rect x="6.600" y="17.200" width="9.600" height="1" rx=".5" fill="#0f5fae"/><rect x="3.900" y="25.400" width="15" height="3" rx="1.500" fill="#1474d8"/></svg>
<!-- store -->
<svg style="left:607px;top:648px" width="23" height="24" viewBox="0 0 23 24"><path d="M6.200 4.400V2.600Q6.200 1.600 7.200 1.600H15.800Q16.800 1.600 16.800 2.600V4.400" fill="none" stroke="#3bb4f2" stroke-width="1.700"/><path d="M0 5Q0 3.800 1.200 3.800H21.400Q22.600 3.800 22.600 5V18.600Q22.600 23.600 17.600 23.600H5Q0 23.600 0 18.600Z" fill="url(#sto)"/><rect x="7" y="10" width="3.700" height="3.700" fill="#f25022"/><rect x="11.800" y="10" width="3.700" height="3.700" fill="#7fba00"/><rect x="7" y="14.700" width="3.700" height="3.700" fill="#12b2f6"/><rect x="11.800" y="14.700" width="3.700" height="3.700" fill="#ffb900"/></svg>
<!-- mail -->
<svg style="left:649px;top:649px" width="23.400" height="21.600" viewBox="0 0 23.400 21.600"><path d="M11.700 0L23.200 7V9H.2V7Z" fill="#1666c2"/><rect x=".2" y="6.900" width="23" height="14.600" rx=".6" fill="url(#mlb)"/><path d="M2.600 7.400H21L11.900 13.600Z" fill="#fdfdfd"/><path d="M2.600 7.400H21L19.600 8.600H4Z" fill="#dfe8f2"/><path d="M11.900 13.600L23.200 21.500H9Z" fill="#1f8fe2" opacity=".8"/></svg>
<!-- settings -->
<svg style="left:690.800px;top:647.800px" width="24" height="24" viewBox="0 0 24 24"><path d="M19.44 9.07L22.30 9.48L22.30 14.52L19.44 14.93L18.26 16.98L19.33 19.66L14.97 22.18L13.18 19.91L10.82 19.91L9.03 22.18L4.67 19.66L5.74 16.98L4.56 14.93L1.70 14.52L1.70 9.48L4.56 9.07L5.74 7.02L4.67 4.34L9.03 1.82L10.82 4.09L13.18 4.09L14.97 1.82L19.33 4.34L18.26 7.02Z" fill="url(#gr)" stroke="url(#gr)" stroke-width="2.200" stroke-linejoin="round"/><circle cx="12" cy="12" r="5.600" fill="#f6f6f6"/><circle cx="12" cy="12" r="4" fill="#1666c4"/></svg>
<!-- tray -->
<svg style="left:900px;top:645px" width="124" height="30" viewBox="900 645 124 30" class="ic" stroke="#1b1b1b" stroke-width="1.150">
<path d="M908.400 663L914.650 656.700L920.900 663" stroke-width="1.300"/>
<rect x="976.600" y="654.400" width="10.800" height="9" rx="1"/><path d="M979.800 667H986.600M982 663.600V667M984.600 663.600V667"/>
<rect x="987.600" y="652.400" width="3.400" height="5.400" rx="1.200" fill="#f1f1f1"/><path d="M989.300 657.800V667"/>
<path d="M999.600 657.800H1001.800L1005 654.600V665.400L1001.800 662.200H999.600Z"/>
<path d="M1007.400 657.600Q1008.800 660 1007.400 662.400M1009.800 655.800Q1012.200 660 1009.800 664.200M1012.200 654Q1015.600 660 1012.200 666"/>
</svg>
<div class="t" style="left:936.1px;top:644.600px;font-size:11.500px;transform:scaleX(0.912)">ENG</div>
<div class="t" style="left:939.6px;top:660px;font-size:11.500px;transform:scaleX(0.981)">UK</div>
</body>
</html>
